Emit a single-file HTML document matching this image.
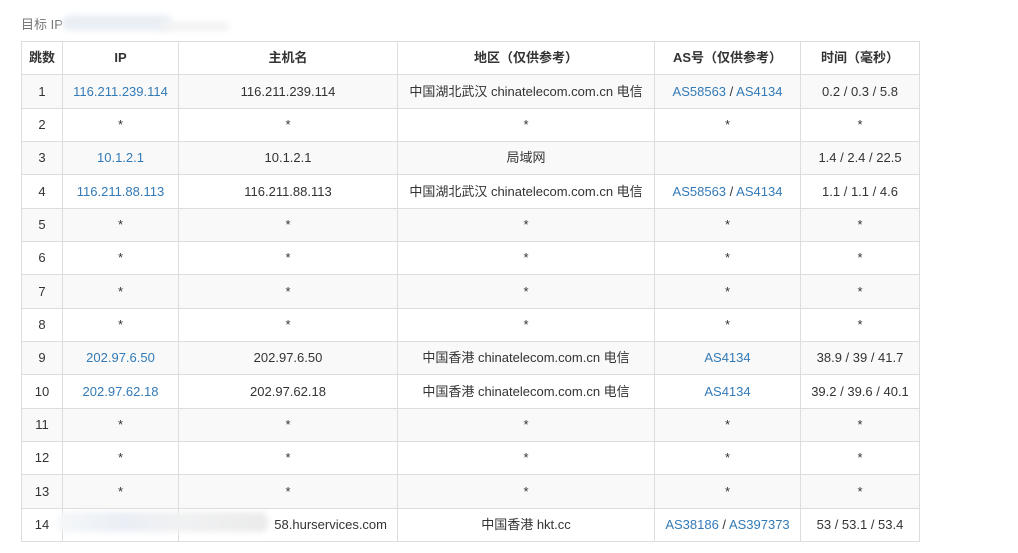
<!DOCTYPE html>
<html><head><meta charset="utf-8"><style>
body{margin:0;background:#fff;font-family:"Liberation Sans","Noto Sans CJK SC",sans-serif;font-size:13px;color:#333;width:1018px;height:553px;overflow:hidden;position:relative}
.t{position:absolute;left:21px;top:16px;color:#777;font-size:13px;line-height:18px}
table{position:absolute;left:21px;top:41px;border-collapse:collapse;width:898px;table-layout:fixed}
tr{height:33.35px}
td,th{border:1px solid #ddd;text-align:center;padding:0;white-space:nowrap;line-height:16px;height:32px;vertical-align:middle;overflow:hidden}
th{font-weight:bold;background:#fff}
tbody tr:nth-child(odd){background:#f9f9f9}
a{color:#337ab7;text-decoration:none}
.blur{position:absolute;border-radius:8px;filter:blur(3px)}
</style></head><body>
<div class="t">目标 IP</div>
<div class="blur" style="left:62px;top:15px;width:110px;height:16px;background:#eaeff5"></div>
<div class="blur" style="left:160px;top:22px;width:70px;height:9px;background:#f3f3f3"></div>
<table>
<colgroup><col style="width:41px"><col style="width:116px"><col style="width:219px"><col style="width:257px"><col style="width:146px"><col style="width:119px"></colgroup>
<thead><tr><th>跳数</th><th>IP</th><th>主机名</th><th>地区（仅供参考）</th><th>AS号（仅供参考）</th><th>时间（毫秒）</th></tr></thead>
<tbody>
<tr><td>1</td><td><a>116.211.239.114</a></td><td>116.211.239.114</td><td>中国湖北武汉 chinatelecom.com.cn 电信</td><td><a>AS58563</a> / <a>AS4134</a></td><td>0.2 / 0.3 / 5.8</td></tr>
<tr><td>2</td><td>*</td><td>*</td><td>*</td><td>*</td><td>*</td></tr>
<tr><td>3</td><td><a>10.1.2.1</a></td><td>10.1.2.1</td><td>局域网</td><td></td><td>1.4 / 2.4 / 22.5</td></tr>
<tr><td>4</td><td><a>116.211.88.113</a></td><td>116.211.88.113</td><td>中国湖北武汉 chinatelecom.com.cn 电信</td><td><a>AS58563</a> / <a>AS4134</a></td><td>1.1 / 1.1 / 4.6</td></tr>
<tr><td>5</td><td>*</td><td>*</td><td>*</td><td>*</td><td>*</td></tr>
<tr><td>6</td><td>*</td><td>*</td><td>*</td><td>*</td><td>*</td></tr>
<tr><td>7</td><td>*</td><td>*</td><td>*</td><td>*</td><td>*</td></tr>
<tr><td>8</td><td>*</td><td>*</td><td>*</td><td>*</td><td>*</td></tr>
<tr><td>9</td><td><a>202.97.6.50</a></td><td>202.97.6.50</td><td>中国香港 chinatelecom.com.cn 电信</td><td><a>AS4134</a></td><td>38.9 / 39 / 41.7</td></tr>
<tr><td>10</td><td><a>202.97.62.18</a></td><td>202.97.62.18</td><td>中国香港 chinatelecom.com.cn 电信</td><td><a>AS4134</a></td><td>39.2 / 39.6 / 40.1</td></tr>
<tr><td>11</td><td>*</td><td>*</td><td>*</td><td>*</td><td>*</td></tr>
<tr><td>12</td><td>*</td><td>*</td><td>*</td><td>*</td><td>*</td></tr>
<tr><td>13</td><td>*</td><td>*</td><td>*</td><td>*</td><td>*</td></tr>
<tr><td>14</td><td></td><td style="text-align:right;padding-right:10px">58.hurservices.com</td><td>中国香港 hkt.cc</td><td><a>AS38186</a> / <a>AS397373</a></td><td>53 / 53.1 / 53.4</td></tr>
</tbody></table>
<div class="blur" style="left:58px;top:512px;width:210px;height:20px;background:linear-gradient(90deg,#f5f7f9,#eaeff5 30%,#f0f1f2 60%,#ebebeb)"></div>
</body></html>
